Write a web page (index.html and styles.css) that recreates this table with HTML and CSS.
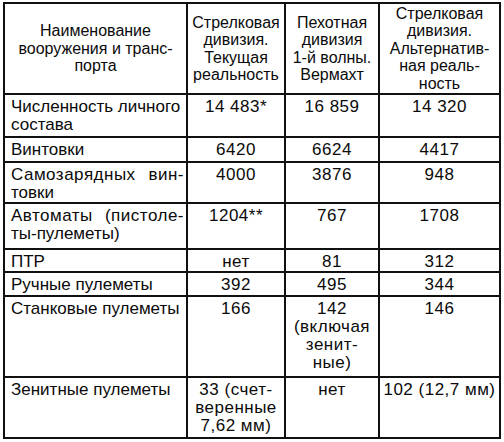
FILE: index.html
```html
<!DOCTYPE html>
<html lang="ru">
<head>
<meta charset="utf-8">
<title>Вооружение дивизий</title>
<link rel="stylesheet" href="styles.css">
</head>
<body>
<table class="arms">
  <colgroup>
    <col class="c1"><col class="c2"><col class="c3"><col class="c4">
  </colgroup>
  <thead>
    <tr class="r-head">
      <th>Наименование<br>вооружения и транс-<br>порта</th>
      <th>Стрелковая<br>дивизия.<br>Текущая<br>реальность</th>
      <th>Пехотная<br>дивизия<br>1-й волны.<br>Вермахт</th>
      <th>Стрелковая<br>дивизия.<br>Альтернатив-<br>ная реаль-<br>ность</th>
    </tr>
  </thead>
  <tbody>
    <tr class="r-43">
      <td class="name">Численность личного<br>состава</td>
      <td>14 483*</td><td>16 859</td><td>14 320</td>
    </tr>
    <tr class="r-25">
      <td class="name">Винтовки</td>
      <td>6420</td><td>6624</td><td>4417</td>
    </tr>
    <tr class="r-41">
      <td class="name"><span class="just">Самозарядных вин-</span>товки</td>
      <td>4000</td><td>3876</td><td>948</td>
    </tr>
    <tr class="r-46">
      <td class="name"><span class="just">Автоматы (пистоле-</span>ты-пулеметы)</td>
      <td>1204**</td><td>767</td><td>1708</td>
    </tr>
    <tr class="r-23">
      <td class="name">ПТР</td>
      <td>нет</td><td>81</td><td>312</td>
    </tr>
    <tr class="r-24">
      <td class="name">Ручные пулеметы</td>
      <td>392</td><td>495</td><td>344</td>
    </tr>
    <tr class="r-81">
      <td class="name">Станковые пулеметы</td>
      <td>166</td><td>142<br>(включая<br>зенит-<br>ные)</td><td>146</td>
    </tr>
    <tr class="r-61">
      <td class="name">Зенитные пулеметы</td>
      <td>33 (счет-<br>веренные<br>7,62 мм)</td><td>нет</td><td>102 (12,7 мм)</td>
    </tr>
  </tbody>
</table>
</body>
</html>
```
FILE: styles.css
```css
html, body {
  margin: 0;
  padding: 0;
  background: #ffffff;
}

body {
  font-family: "Liberation Sans", Arial, sans-serif;
  color: #0a0a0a;
}

.arms {
  border-collapse: collapse;
  table-layout: fixed;
  width: 498px;
  margin: 2px 0 0 3px;
}

.c1 { width: 183px; }
.c2 { width: 98px; }
.c3 { width: 94px; }
.c4 { width: 121px; }

.arms th,
.arms td {
  border: 2px solid #111111;
  font-weight: normal;
  text-align: center;
}

.arms th {
  font-size: 16px;
  line-height: 17.5px;
  vertical-align: middle;
  padding: 0 1px;
  white-space: nowrap;
}

.arms td {
  font-size: 17px;
  line-height: 18px;
  vertical-align: top;
  padding: 3px 0 0;
  white-space: nowrap;
  letter-spacing: 0.5px;
}

.arms td.name {
  text-align: left;
  padding-left: 6px;
  padding-right: 2px;
  letter-spacing: 0;
}

.just {
  display: block;
  white-space: normal;
  letter-spacing: 0.5px;
  text-align: justify;
  text-align-last: justify;
}

.r-head { height: 91px; }
.r-43 { height: 43px; }
.r-25 { height: 25px; }
.r-41 { height: 41px; }
.r-46 { height: 46px; }
.r-23 { height: 23px; }
.r-24 { height: 24px; }
.r-81 { height: 81px; }
.r-61 { height: 61px; }
```
